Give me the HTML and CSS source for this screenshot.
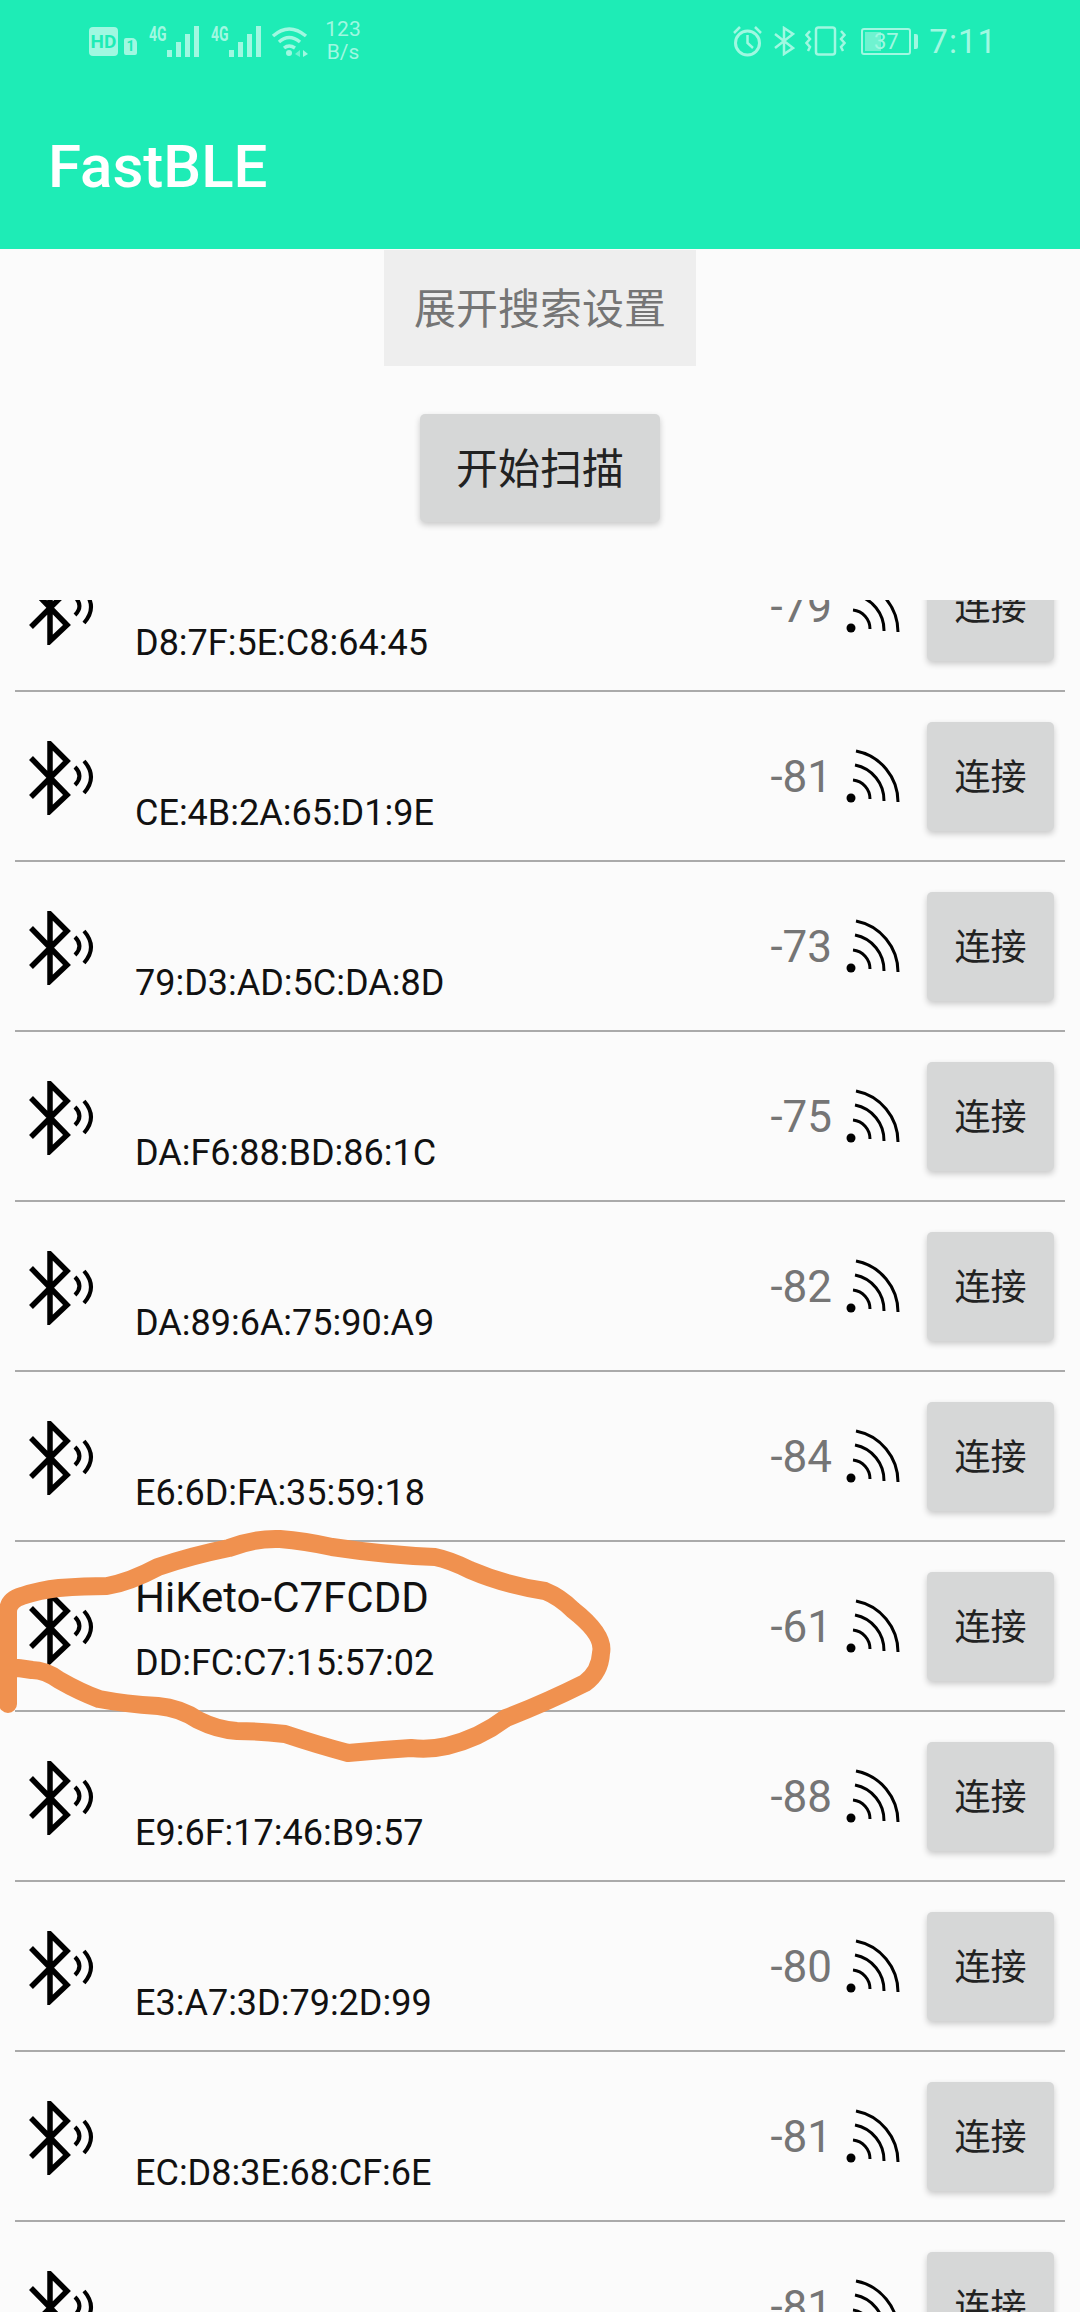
FILE: index.html
```html
<!DOCTYPE html>
<html>

<head lang="en">
    <meta charset="UTF-8">
    <title>FastBLE</title>
    <link rel="stylesheet" href="styles.css">
</head>

<body>

    <svg class="defs" width="0" height="0">
        <symbol id="ble" viewBox="0 0 66 74">
            <path d="M3 17 L39 54 L22 70 V3 L39 20 L3 56" fill="none" stroke="#000" stroke-width="5.5" />
            <path d="M47 26 Q56 35 47 44" fill="none" stroke="#000" stroke-width="4" />
            <path d="M56 20 Q70 36 56 52" fill="none" stroke="#000" stroke-width="4" />
        </symbol>
        <symbol id="rssi" viewBox="0 0 56 56">
            <circle cx="6" cy="50" r="4.5" fill="#000" />
            <path d="M8 32 A19 19 0 0 1 25 51" fill="none" stroke="#000" stroke-width="3" />
            <path d="M10 17 A36 36 0 0 1 39 53" fill="none" stroke="#000" stroke-width="3" />
            <path d="M11 3 A52 52 0 0 1 53 54" fill="none" stroke="#000" stroke-width="3" />
        </symbol>
        <symbol id="bars" viewBox="0 0 33 31">
            <rect x="0" y="24" width="5" height="7" />
            <rect x="9" y="16" width="5" height="15" />
            <rect x="18" y="8" width="5" height="23" />
            <rect x="27" y="0" width="5" height="31" />
        </symbol>
    </svg>

    <div class="app">

        <header class="header">
            <div class="status">
                <div class="status-left">
                    <span class="hd">HD</span>
                    <span class="sim">1</span>
                    <span class="net"><span class="net-label">4G</span><svg class="bars" width="33" height="31"><use href="#bars" /></svg></span>
                    <span class="net"><span class="net-label">4G</span><svg class="bars" width="33" height="31"><use href="#bars" /></svg></span>
                    <svg class="wifi" width="38" height="32" viewBox="0 0 38 32">
                        <path d="M2 11 Q18 -3 35 11" fill="none" stroke="#a0f8e1" stroke-width="3.5" />
                        <path d="M8 17 Q18 8 29 17" fill="none" stroke="#a0f8e1" stroke-width="3.5" />
                        <path d="M13 23 Q18 19 24 23" fill="none" stroke="#a0f8e1" stroke-width="3.5" />
                        <circle cx="18" cy="28" r="3" fill="#a0f8e1" />
                        <path d="M29 25 L24 29 L29 32 Z" fill="#6ff3d0" />
                        <path d="M32 25 L37 29 L32 32 Z" fill="#a0f8e1" />
                    </svg>
                    <span class="speed">123<br>B/s</span>
                </div>
                <div class="status-right">
                    <svg width="31" height="32" viewBox="0 0 31 32">
                        <circle cx="15.5" cy="18" r="12" fill="none" stroke="#a0f8e1" stroke-width="3" />
                        <path d="M15.5 10 V18 L21 23" fill="none" stroke="#a0f8e1" stroke-width="2.5" />
                        <path d="M2 8 L8 2 M23 2 L29 8" fill="none" stroke="#a0f8e1" stroke-width="2.5" />
                    </svg>
                    <svg class="bt" width="21" height="30" viewBox="0 0 21 30">
                        <path d="M1 8 L19 22 L10 28 V2 L19 8 L1 22" fill="none" stroke="#a0f8e1" stroke-width="2.5" />
                    </svg>
                    <svg class="vib" width="41" height="30" viewBox="0 0 41 30">
                        <rect x="11" y="1.5" width="19" height="27" rx="2.5" fill="none" stroke="#a0f8e1" stroke-width="2.5" />
                        <path d="M5 5 L1.5 9 L5 13 L1.500 17 L5 21 L3 25" fill="none" stroke="#a0f8e1" stroke-width="2.5" />
                        <path d="M36 5 L39.500 9 L36 13 L39.500 17 L36 21 L38 25" fill="none" stroke="#a0f8e1" stroke-width="2.5" />
                    </svg>
                    <span class="battery"><span class="battery-level"></span><span class="battery-num">37</span></span>
                    <span class="battery-tip"></span>
                    <span class="clock">7:11</span>
                </div>
            </div>
            <div class="toolbar">FastBLE</div>
        </header>

        <div class="controls">
            <div class="btn-expand">展开搜索设置</div>
            <div class="btn-scan">开始扫描</div>
        </div>

        <div class="list">
            <div class="list-inner">

                <div class="row">
                    <svg class="row-ble"><use href="#ble" /></svg>
                    <div class="row-text">
                        <div class="row-name"></div>
                        <div class="row-mac">D8:7F:5E:C8:64:45</div>
                    </div>
                    <div class="row-rssi">-79</div>
                    <svg class="row-signal"><use href="#rssi" /></svg>
                    <div class="btn-connect">连接</div>
                </div>

                <div class="row">
                    <svg class="row-ble"><use href="#ble" /></svg>
                    <div class="row-text">
                        <div class="row-name"></div>
                        <div class="row-mac">CE:4B:2A:65:D1:9E</div>
                    </div>
                    <div class="row-rssi">-81</div>
                    <svg class="row-signal"><use href="#rssi" /></svg>
                    <div class="btn-connect">连接</div>
                </div>

                <div class="row">
                    <svg class="row-ble"><use href="#ble" /></svg>
                    <div class="row-text">
                        <div class="row-name"></div>
                        <div class="row-mac">79:D3:AD:5C:DA:8D</div>
                    </div>
                    <div class="row-rssi">-73</div>
                    <svg class="row-signal"><use href="#rssi" /></svg>
                    <div class="btn-connect">连接</div>
                </div>

                <div class="row">
                    <svg class="row-ble"><use href="#ble" /></svg>
                    <div class="row-text">
                        <div class="row-name"></div>
                        <div class="row-mac">DA:F6:88:BD:86:1C</div>
                    </div>
                    <div class="row-rssi">-75</div>
                    <svg class="row-signal"><use href="#rssi" /></svg>
                    <div class="btn-connect">连接</div>
                </div>

                <div class="row">
                    <svg class="row-ble"><use href="#ble" /></svg>
                    <div class="row-text">
                        <div class="row-name"></div>
                        <div class="row-mac">DA:89:6A:75:90:A9</div>
                    </div>
                    <div class="row-rssi">-82</div>
                    <svg class="row-signal"><use href="#rssi" /></svg>
                    <div class="btn-connect">连接</div>
                </div>

                <div class="row">
                    <svg class="row-ble"><use href="#ble" /></svg>
                    <div class="row-text">
                        <div class="row-name"></div>
                        <div class="row-mac">E6:6D:FA:35:59:18</div>
                    </div>
                    <div class="row-rssi">-84</div>
                    <svg class="row-signal"><use href="#rssi" /></svg>
                    <div class="btn-connect">连接</div>
                </div>

                <div class="row">
                    <svg class="row-ble"><use href="#ble" /></svg>
                    <div class="row-text">
                        <div class="row-name">HiKeto-C7FCDD</div>
                        <div class="row-mac">DD:FC:C7:15:57:02</div>
                    </div>
                    <div class="row-rssi">-61</div>
                    <svg class="row-signal"><use href="#rssi" /></svg>
                    <div class="btn-connect">连接</div>
                </div>

                <div class="row">
                    <svg class="row-ble"><use href="#ble" /></svg>
                    <div class="row-text">
                        <div class="row-name"></div>
                        <div class="row-mac">E9:6F:17:46:B9:57</div>
                    </div>
                    <div class="row-rssi">-88</div>
                    <svg class="row-signal"><use href="#rssi" /></svg>
                    <div class="btn-connect">连接</div>
                </div>

                <div class="row">
                    <svg class="row-ble"><use href="#ble" /></svg>
                    <div class="row-text">
                        <div class="row-name"></div>
                        <div class="row-mac">E3:A7:3D:79:2D:99</div>
                    </div>
                    <div class="row-rssi">-80</div>
                    <svg class="row-signal"><use href="#rssi" /></svg>
                    <div class="btn-connect">连接</div>
                </div>

                <div class="row">
                    <svg class="row-ble"><use href="#ble" /></svg>
                    <div class="row-text">
                        <div class="row-name"></div>
                        <div class="row-mac">EC:D8:3E:68:CF:6E</div>
                    </div>
                    <div class="row-rssi">-81</div>
                    <svg class="row-signal"><use href="#rssi" /></svg>
                    <div class="btn-connect">连接</div>
                </div>

                <div class="row">
                    <svg class="row-ble"><use href="#ble" /></svg>
                    <div class="row-text">
                        <div class="row-name"></div>
                        <div class="row-mac"></div>
                    </div>
                    <div class="row-rssi">-81</div>
                    <svg class="row-signal"><use href="#rssi" /></svg>
                    <div class="btn-connect">连接</div>
                </div>

            </div>
        </div>

    </div>

    <!-- hand drawn marker round the HiKeto row -->
    <svg class="marker" width="1080" height="2312" viewBox="0 0 1080 2312">
        <path d="M8 1704 V1612 Q8 1600 22 1596 Q40 1590 59 1588 Q85 1586 107 1586 Q130 1582 158 1567 Q190 1556 229 1548 Q255 1538 280 1539 Q305 1541 332 1547 Q385 1555 435 1557 Q450 1560 470 1570 Q505 1585 545 1591 Q560 1597 573 1610 Q605 1635 601 1653 Q600 1672 585 1683 Q545 1703 506 1718 Q480 1738 447 1746 Q430 1750 411 1748 Q380 1750 348 1753 Q318 1745 285 1734 Q260 1731 237 1731 Q218 1730 198 1720 Q180 1708 158 1706 Q125 1704 99 1699 Q80 1692 59 1680 Q45 1670 32 1670 Q20 1668 8 1667"
            fill="none" stroke="#f0914f" stroke-width="18" stroke-linecap="round" stroke-linejoin="round" />
    </svg>

</body>

</html>
```

FILE: styles.css
```css
* {
    box-sizing: border-box;
}

html,
body {
    margin: 0;
    height: 2312px;
    overflow: hidden;
}

body {
    position: relative;
    background: #fbfbfb;
    font-family: Roboto, "Noto Sans CJK SC", sans-serif;
}

.defs {
    position: absolute;
}

.app {
    display: flex;
    flex-direction: column;
    height: 2312px;
}

/* header */
.header {
    height: 249px;
    flex-shrink: 0;
    background: #1eecb6;
}

.status {
    display: flex;
    justify-content: space-between;
    align-items: center;
    height: 82px;
    padding: 0 83px 0 89px;
    color: #a0f8e1;
}

.status-left,
.status-right {
    display: flex;
    align-items: center;
}

.hd {
    width: 29px;
    height: 29px;
    border-radius: 4px;
    background: #a0f8e1;
    color: #1eecb6;
    font-size: 19px;
    font-weight: 700;
    line-height: 29px;
    text-align: center;
}

.sim {
    width: 13px;
    height: 17px;
    margin: 10px 0 0 6px;
    border-radius: 2px 5px 2px 2px;
    background: #a0f8e1;
    color: #1eecb6;
    font-size: 14px;
    font-weight: 700;
    line-height: 17px;
    text-align: center;
}

.net {
    display: flex;
    align-items: flex-start;
    margin-left: 12px;
    height: 31px;
}

.net + .net {
    margin-left: 11px;
}

.net-label {
    width: 18px;
    font-size: 20px;
    font-weight: 700;
    line-height: 16px;
    transform: scaleX(.7);
    transform-origin: left;
}

.bars {
    fill: #a0f8e1;
}

.wifi {
    margin-left: 9px;
}

.speed {
    width: 40px;
    margin-left: 14px;
    font-size: 21px;
    line-height: 23px;
    text-align: center;
}

.bt {
    margin-left: 11px;
}

.vib {
    margin-left: 10px;
}

.battery {
    position: relative;
    width: 50px;
    height: 27px;
    margin-left: 15px;
    border: 2px solid #a0f8e1;
    border-radius: 3px;
}

.battery-level {
    position: absolute;
    left: 2px;
    top: 2px;
    bottom: 2px;
    width: 35%;
    background: #6ff3d0;
}

.battery-num {
    position: absolute;
    left: 0;
    right: 0;
    top: 0;
    font-size: 22px;
    line-height: 23px;
    text-align: center;
}

.battery-tip {
    width: 4px;
    height: 15px;
    margin-left: 3px;
    border-radius: 0 2px 2px 0;
    background: #a0f8e1;
}

.clock {
    margin-left: 11px;
    font-size: 33px;
    letter-spacing: 1px;
}

.toolbar {
    padding: 0 0 0 48px;
    color: #fff;
    font-size: 60px;
    font-weight: 500;
    line-height: 169px;
}

/* top buttons */
.controls {
    display: flex;
    flex-direction: column;
    align-items: center;
    flex-shrink: 0;
    height: 351px;
    padding-top: 1px;
}

.btn-expand {
    width: 312px;
    height: 116px;
    background: #eeeeee;
    color: #757575;
    font-size: 42px;
    line-height: 120px;
    text-align: center;
}

.btn-scan {
    width: 240px;
    height: 108px;
    margin-top: 48px;
    border-radius: 5px;
    background: #d6d7d7;
    box-shadow: 0 3px 6px rgba(0, 0, 0, .2);
    color: #222;
    font-size: 42px;
    line-height: 112px;
    text-align: center;
}

/* device list */
.list {
    flex: 1;
    overflow: hidden;
}

.list-inner {
    margin-top: -78px;
}

.row {
    display: flex;
    align-items: center;
    height: 170px;
    margin: 0 15px;
    border-bottom: 2px solid #aaaaaa;
}

.row-ble {
    width: 66px;
    height: 74px;
    margin: 0 0 0 13px;
    flex-shrink: 0;
    align-self: flex-start;
    margin-top: 49px;
}

.row-text {
    flex: 1;
    align-self: flex-start;
    margin-left: 41px;
    padding-top: 30px;
}

.row-name {
    height: 52px;
    margin-bottom: 12px;
    color: #111;
    font-size: 42px;
    line-height: 52px;
}

.row-mac {
    height: 52px;
    color: #111;
    font-size: 36px;
    line-height: 54px;
}

.row-rssi {
    color: #757575;
    font-size: 44px;
    line-height: 54px;
    padding-top: 2px;
}

.row-signal {
    width: 56px;
    height: 56px;
    margin-left: 13px;
    flex-shrink: 0;
}

.btn-connect {
    width: 127px;
    height: 109px;
    margin: 0 11px 0 26px;
    flex-shrink: 0;
    border-radius: 5px;
    background: #d6d7d7;
    box-shadow: 0 3px 6px rgba(0, 0, 0, .2);
    color: #222;
    font-size: 36px;
    line-height: 113px;
    text-align: center;
}

/* marker stroke lies over the page */
.marker {
    position: absolute;
    left: 0;
    top: 0;
    pointer-events: none;
}
```
